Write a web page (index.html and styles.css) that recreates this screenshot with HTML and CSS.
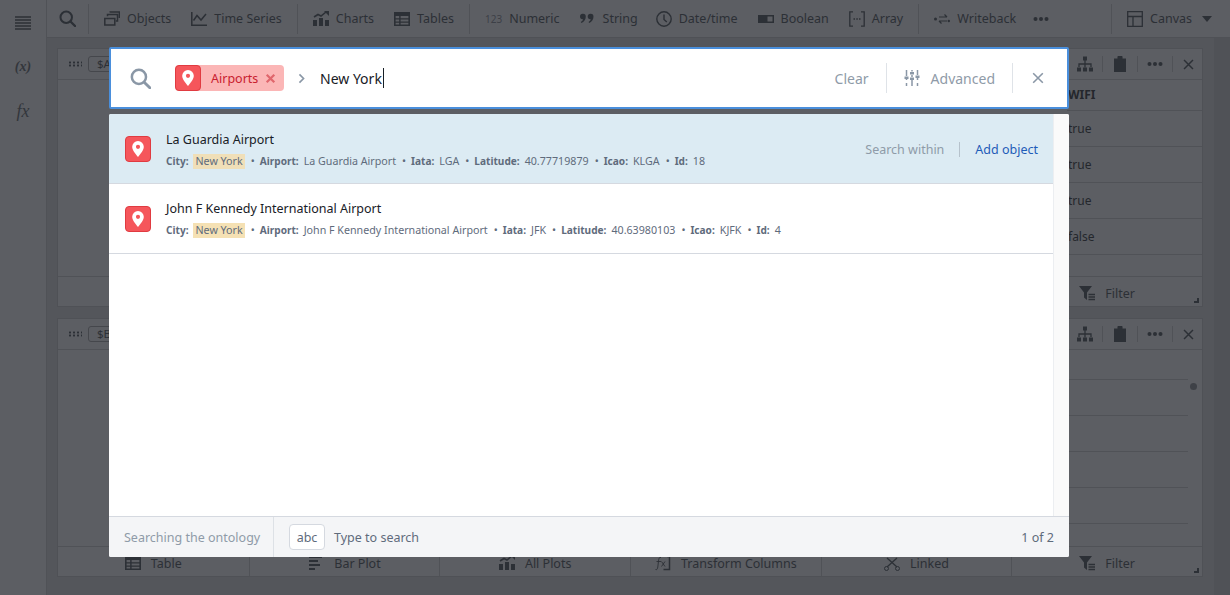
FILE: index.html
```html
<!DOCTYPE html>
<html lang="en">
<head>
<meta charset="utf-8">
<title>Object search</title>
<link rel="stylesheet" href="styles.css">
</head>
<body>
<svg class="defs" aria-hidden="true">
  <symbol id="i-search" viewBox="0 0 16 16"><circle cx="6.8" cy="6.8" r="5.4" fill="none" stroke="currentColor" stroke-width="1.9"/><path d="M10.8 10.8l4.3 4.3" stroke="currentColor" stroke-width="2.2" stroke-linecap="round"/></symbol>
  <symbol id="i-menu" viewBox="0 0 16 16"><path d="M0 2h16M0 5h16M0 8h16M0 11h16M0 14h16" stroke="currentColor" stroke-width="1.5"/></symbol>
  <symbol id="i-objects" viewBox="0 0 16 16"><path d="M.8 7.5h10v6.5H.8zM3.5 5.2V3.6h10V10h-1.6M6.2 1.4V1h9.2v6" fill="none" stroke="currentColor" stroke-width="1.5"/></symbol>
  <symbol id="i-series" viewBox="0 0 16 16"><path d="M.8 1v13.2H16" fill="none" stroke="currentColor" stroke-width="1.5"/><path d="M2.5 9.5l3.5-5 4 4.5 5-6" fill="none" stroke="currentColor" stroke-width="1.5"/></symbol>
  <symbol id="i-charts" viewBox="0 0 16 16"><path d="M0 9h4v6H0zM6 7h4v8H6zM12 9h4v6h-4z" fill="currentColor"/><path d="M1 6l4-2.5 3 1.5 5-4" fill="none" stroke="currentColor" stroke-width="1.6"/><path d="M11 0h5v5z" fill="currentColor"/></symbol>
  <symbol id="i-table" viewBox="0 0 16 16"><path fill-rule="evenodd" fill="currentColor" d="M0 1h16v14H0zM1.6 5v2.2h3.6V5zM6.6 5v2.2h7.8V5zM1.6 8.4v2.2h3.6V8.4zM6.6 8.4v2.2h7.8V8.4zM1.6 11.8v1.8h3.6v-1.8zM6.6 11.8v1.8h7.8v-1.8z"/></symbol>
  <symbol id="i-quote" viewBox="0 0 16 16"><path fill="currentColor" d="M0 5.2a3.2 3.2 0 1 1 6.6.3c0 3.4-2 6-5 7l-.6-1.200c1.400-.7 2.300-1.800 2.500-3A3.200 3.200 0 0 1 0 5.200zM8.800 5.200a3.200 3.200 0 1 1 6.600.3c0 3.400-2 6-5 7l-.6-1.200c1.400-.7 2.300-1.800 2.500-3a3.200 3.200 0 0 1-3.500-3.100z"/></symbol>
  <symbol id="i-clock" viewBox="0 0 16 16"><circle cx="8" cy="8" r="7.200" fill="none" stroke="currentColor" stroke-width="1.400"/><path d="M8 3.500V8.500l2.800 2.500" fill="none" stroke="currentColor" stroke-width="1.400"/></symbol>
  <symbol id="i-bool" viewBox="0 0 16 16"><path fill-rule="evenodd" fill="currentColor" d="M0 4h16v8H0zM9.500 5.500v5H14.500v-5z"/></symbol>
  <symbol id="i-array" viewBox="0 0 16 16"><path d="M4 .8H.8v14.400H4M12 .8h3.200v14.400H12" fill="none" stroke="currentColor" stroke-width="1.300"/><path d="M4.500 8h1.500M7.300 8h1.500M10 8h1.500" stroke="currentColor" stroke-width="1.500"/></symbol>
  <symbol id="i-write" viewBox="0 0 16 16"><circle cx="1.500" cy="8" r="1.500" fill="currentColor"/><path d="M5 6h8M10.500 3.500L13 6M5 10h8M7.500 12.500L5 10" fill="none" stroke="currentColor" stroke-width="1.200"/><circle cx="14.800" cy="10" r="1.200" fill="currentColor"/></symbol>
  <symbol id="i-dots" viewBox="0 0 16 16"><circle cx="2.500" cy="8" r="2" fill="currentColor"/><circle cx="8" cy="8" r="2" fill="currentColor"/><circle cx="13.500" cy="8" r="2" fill="currentColor"/></symbol>
  <symbol id="i-canvas" viewBox="0 0 16 16"><path d="M.7.700h14.600v14.600H.7zM.7 5.500h14.600M6 5.500v9.800" fill="none" stroke="currentColor" stroke-width="1.300"/></symbol>
  <symbol id="i-tree" viewBox="0 0 16 16"><path fill="currentColor" d="M6 .500h4v4H6zM0 11.500h4v4H0zM6 11.500h4v4H6zM12 11.500h4v4h-4z"/><path d="M8 4v7.500M2 11V8h12v3" fill="none" stroke="currentColor" stroke-width="1.300"/></symbol>
  <symbol id="i-clip" viewBox="0 0 16 16"><path fill="currentColor" d="M2 2.500h3.500V1.500a1 1 0 0 1 1-1.500h3a1 1 0 0 1 1 1.500v1H14V16H2z"/></symbol>
  <symbol id="i-x" viewBox="0 0 16 16"><path d="M2.500 2.500l11 11M13.500 2.500l-11 11" stroke="currentColor" stroke-width="1.800"/></symbol>
  <symbol id="i-x-bold" viewBox="0 0 16 16"><path d="M2.500 2.500l11 11M13.500 2.500l-11 11" stroke="currentColor" stroke-width="3.200"/></symbol>
  <symbol id="i-filter" viewBox="0 0 16 16"><path fill="currentColor" d="M0 1h13L8 7.500V15L5 12.500V7.500z"/><path d="M9.500 9.500H16M9.500 12H16M9.500 14.500H16" stroke="currentColor" stroke-width="1.300"/></symbol>
  <symbol id="i-bars" viewBox="0 0 16 16"><path d="M1 2h13M1 6h9M1 10h11M1 14h6" stroke="currentColor" stroke-width="1.800"/></symbol>
  <symbol id="i-fx" viewBox="0 0 16 16"><path d="M12 1.500h2.500v13H8.500" fill="none" stroke="currentColor" stroke-width="1.500"/><path d="M6 2.500C4 2 3.800 3.500 3.500 6L2.800 12C2.500 14 2 15 .5 14.500M1.500 6.500H6M6.500 6.500l3.500 5M10 6.500l-3.500 5" fill="none" stroke="currentColor" stroke-width=".9"/></symbol>
  <symbol id="i-linked" viewBox="0 0 16 16"><circle cx="2.500" cy="13.500" r="2" fill="none" stroke="currentColor" stroke-width="1"/><circle cx="13.500" cy="13.500" r="2" fill="none" stroke="currentColor" stroke-width="1"/><path d="M3 3l10 9M13 3L3 12" stroke="currentColor" stroke-width="1.300"/></symbol>
  <symbol id="i-pin" viewBox="0 0 16 16"><path fill-rule="evenodd" fill="currentColor" d="M8 0a5.800 5.800 0 0 1 5.800 5.800C13.800 9.500 10 13.500 8 16 6 13.500 2.200 9.500 2.200 5.800A5.800 5.800 0 0 1 8 0zM8 3.700a2.100 2.100 0 1 0 0 4.200 2.100 2.100 0 0 0 0-4.200z"/></symbol>
  <symbol id="i-sliders" viewBox="0 0 16 16"><path d="M2.500 0v6M2.500 9v1M2.500 13v3M8 0v1.500M8 5v2M8 10v6M13.500 0v5M13.500 8v2M13.500 13v3" stroke="currentColor" stroke-width="1.500"/><path d="M.5 6.500h4v2.500h-4zM6 2h4v2.500H6zM6 7.500h4V10H6zM11.500 5.500h4V8h-4z" fill="currentColor"/></symbol>
  <symbol id="i-chev" viewBox="0 0 16 16"><path d="M5 2l6 6-6 6" fill="none" stroke="currentColor" stroke-width="2.400"/></symbol>
</svg>

<div class="app">
  <aside class="rail">
    <svg class="rail-menu"><use href="#i-menu"/></svg>
    <span class="rail-var">(x)</span>
    <span class="rail-fx">fx</span>
  </aside>
  <div class="main">
    <header class="toolbar">
      <svg class="ic ic-lg tb-search"><use href="#i-search"/></svg>
      <span class="tb-sep"></span>
      <span class="tool"><svg class="ic"><use href="#i-objects"/></svg>Objects</span>
      <span class="tool"><svg class="ic"><use href="#i-series"/></svg>Time Series</span>
      <span class="tb-sep"></span>
      <span class="tool"><svg class="ic"><use href="#i-charts"/></svg>Charts</span>
      <span class="tool"><svg class="ic"><use href="#i-table"/></svg>Tables</span>
      <span class="tb-sep"></span>
      <span class="tool"><span class="num">123</span>Numeric</span>
      <span class="tool tool-string"><svg class="ic ic-sm"><use href="#i-quote"/></svg>String</span>
      <span class="tool"><svg class="ic"><use href="#i-clock"/></svg>Date/time</span>
      <span class="tool"><svg class="ic"><use href="#i-bool"/></svg>Boolean</span>
      <span class="tool"><svg class="ic"><use href="#i-array"/></svg>Array</span>
      <span class="tb-sep"></span>
      <span class="tool tool-write"><svg class="ic"><use href="#i-write"/></svg>Writeback</span>
      <svg class="ic"><use href="#i-dots"/></svg>
      <span class="tb-fill"></span>
      <span class="tb-sep"></span>
      <span class="tool"><svg class="ic"><use href="#i-canvas"/></svg>Canvas<span class="caret"></span></span>
    </header>
    <div class="stage">
      <div class="panels">
        <section class="panel">
          <div class="panel-head">
            <span class="grip"></span><span class="token">$A</span><span class="head-fill"></span>
            <svg class="ic"><use href="#i-tree"/></svg><span class="head-sep"></span>
            <svg class="ic"><use href="#i-clip"/></svg><span class="head-sep"></span>
            <svg class="ic"><use href="#i-dots"/></svg><span class="head-sep"></span>
            <svg class="ic ic-x"><use href="#i-x"/></svg>
          </div>
          <div class="panel-body">
            <div class="cols">
              <div class="cell cell-head">WIFI</div>
              <div class="cell">true</div>
              <div class="cell">true</div>
              <div class="cell">true</div>
              <div class="cell">false</div>
            </div>
          </div>
          <div class="panel-foot">
            <span class="foot-item"><svg class="ic"><use href="#i-table"/></svg>Table</span>
            <span class="foot-item"><svg class="ic"><use href="#i-bars"/></svg>Bar Plot</span>
            <span class="foot-item"><svg class="ic"><use href="#i-charts"/></svg>All Plots</span>
            <span class="foot-item"><svg class="ic"><use href="#i-fx"/></svg>Transform Columns</span>
            <span class="foot-item"><svg class="ic"><use href="#i-linked"/></svg>Linked</span>
            <span class="foot-item"><svg class="ic"><use href="#i-filter"/></svg>Filter</span>
            <span class="resize"></span>
          </div>
        </section>
        <section class="panel">
          <div class="panel-head">
            <span class="grip"></span><span class="token">$B</span><span class="head-fill"></span>
            <svg class="ic"><use href="#i-tree"/></svg><span class="head-sep"></span>
            <svg class="ic"><use href="#i-clip"/></svg><span class="head-sep"></span>
            <svg class="ic"><use href="#i-dots"/></svg><span class="head-sep"></span>
            <svg class="ic ic-x"><use href="#i-x"/></svg>
          </div>
          <div class="panel-body panel-body-chart">
            <div class="chart">
              <div class="grid-line"></div>
              <div class="grid-line"></div>
              <div class="grid-line"></div>
              <div class="grid-line"></div>
              <div class="grid-line"></div>
            </div>
            <span class="chart-dot"></span>
          </div>
          <div class="panel-foot">
            <span class="foot-item"><svg class="ic"><use href="#i-table"/></svg>Table</span>
            <span class="foot-item"><svg class="ic"><use href="#i-bars"/></svg>Bar Plot</span>
            <span class="foot-item"><svg class="ic"><use href="#i-charts"/></svg>All Plots</span>
            <span class="foot-item"><svg class="ic"><use href="#i-fx"/></svg>Transform Columns</span>
            <span class="foot-item"><svg class="ic"><use href="#i-linked"/></svg>Linked</span>
            <span class="foot-item"><svg class="ic"><use href="#i-filter"/></svg>Filter</span>
            <span class="resize"></span>
          </div>
        </section>
      </div>
      <div class="gutter"></div>
    </div>
  </div>
</div>

<div class="overlay">
  <div class="searchbar">
    <svg class="sb-search"><use href="#i-search"/></svg>
    <span class="chip">
      <span class="pin-box"><svg class="pin"><use href="#i-pin"/></svg></span>
      <span class="chip-label">Airports</span>
      <svg class="chip-x"><use href="#i-x-bold"/></svg>
    </span>
    <svg class="chev"><use href="#i-chev"/></svg>
    <span class="query">New York</span><span class="cursor"></span>
    <span class="sb-fill"></span>
    <span class="sb-btn">Clear</span>
    <span class="sb-sep"></span>
    <svg class="sliders"><use href="#i-sliders"/></svg>
    <span class="sb-btn">Advanced</span>
    <span class="sb-sep sb-sep-b"></span>
    <svg class="sb-x"><use href="#i-x"/></svg>
  </div>
  <div class="results">
    <div class="results-scroll">
      <div class="list">
        <article class="row row-active">
          <span class="pin-box pin-box-row"><svg class="pin"><use href="#i-pin"/></svg></span>
          <div class="row-text">
            <div class="row-title">La Guardia Airport</div>
            <div class="row-meta"><b>City:</b><mark>New York</mark><i>•</i><b>Airport:</b><span>La Guardia Airport</span><i>•</i><b>Iata:</b><span>LGA</span><i>•</i><b>Latitude:</b><span>40.77719879</span><i>•</i><b>Icao:</b><span>KLGA</span><i>•</i><b>Id:</b><span>18</span></div>
          </div>
          <div class="row-actions"><span class="act-muted">Search within</span><span class="act-sep"></span><span class="act-link">Add object</span></div>
        </article>
        <article class="row">
          <span class="pin-box pin-box-row"><svg class="pin"><use href="#i-pin"/></svg></span>
          <div class="row-text">
            <div class="row-title">John F Kennedy International Airport</div>
            <div class="row-meta"><b>City:</b><mark>New York</mark><i>•</i><b>Airport:</b><span>John F Kennedy International Airport</span><i>•</i><b>Iata:</b><span>JFK</span><i>•</i><b>Latitude:</b><span>40.63980103</span><i>•</i><b>Icao:</b><span>KJFK</span><i>•</i><b>Id:</b><span>4</span></div>
          </div>
        </article>
      </div>
      <div class="scroll-track"></div>
    </div>
    <footer class="res-foot">
      <span class="res-scope">Searching the ontology</span>
      <span class="res-key">abc</span>
      <span class="res-hint">Type to search</span>
      <span class="res-count">1 of 2</span>
    </footer>
  </div>
</div>
</body>
</html>
```
FILE: styles.css
```css
* { box-sizing: border-box; }
html, body { margin: 0; height: 100%; overflow: hidden; }
body { font-family: "Noto Sans", "Open Sans", sans-serif; color: #2c3036; background: #54565b; }
.defs { position: absolute; width: 0; height: 0; }
.app { display: flex; height: 595px; }
.ic { width: 16px; height: 16px; flex: none; color: #2c3036; }
.ic-lg { width: 17px; height: 17px; }
.ic-sm { width: 14px; height: 14px; }
.ic-x { width: 13px; height: 13px; }

.rail { width: 47px; flex: none; background: #5c5e63; border-right: 1px solid #505257; display: flex; flex-direction: column; align-items: center; }
.rail-menu { width: 16px; height: 16px; margin-top: 15px; color: #2c3036; }
.rail-var, .rail-fx { font-family: "Liberation Serif", serif; font-style: italic; color: #33363c; }
.rail-var { font-size: 14px; font-weight: 700; margin-top: 28px; }
.rail-fx { font-size: 18px; margin-top: 26px; }

.main { flex: 1; min-width: 0; display: flex; flex-direction: column; }
.toolbar { height: 38px; flex: none; display: flex; align-items: center; padding: 0 18px 0 12px; background: #5c5e63; border-bottom: 1px solid #4f5156; font-size: 12.500px; gap: 20px; color: #2c3036; white-space: nowrap; }
.tb-search { margin-right: -3px; }
.tool { display: flex; align-items: center; gap: 7px; }
.tool-string { gap: 9px; margin-right: -2px; }
.tool-write { margin-right: -3px; }
.tb-sep { width: 1px; height: 30px; background: #505257; margin: 0 -5px 0 -5px; flex: none; }
.tb-fill { flex: 1; }
.num { font-size: 10px; color: #3c4047; }
.caret { width: 0; height: 0; border: 5px solid transparent; border-top: 6px solid #2c3036; border-bottom: 0; margin-left: 3px; }

.stage { flex: 1; display: flex; min-height: 0; }
.panels { flex: 1; display: grid; grid-template-rows: 259px 259px; gap: 11px; padding: 10px 11px 0 10px; }
.gutter { width: 16px; background: #505257; flex: none; }
.panel { display: flex; flex-direction: column; background: #5c5e63; border: 1px solid #4f5156; min-height: 0; }
.panel-head { height: 31px; flex: none; display: flex; align-items: center; gap: 9px; padding: 0 7px 0 10px; border-bottom: 1px solid #505257; }
.grip { width: 14px; height: 6px; background-image: radial-gradient(circle, #2c3036 1px, transparent 1.200px); background-size: 4px 3px; }
.token { margin-left: -3px; height: 16px; width: 60px; font-size: 11.500px; line-height: 14px; padding-left: 8px; border: 1px solid #45474c; border-radius: 3px; color: #2c3036; }
.head-fill { flex: 1; }
.head-sep { width: 1px; height: 16px; background: #505257; }
.panel-body { flex: 1; display: flex; justify-content: flex-end; min-height: 0; position: relative; }
.cols { width: 135px; font-size: 12px; }
.cell { height: 36px; line-height: 36px; padding-left: 1px; border-bottom: 1px solid #505257; color: #24272c; }
.cell-head { height: 31px; line-height: 29px; font-weight: 700; }
.panel-body-chart { padding: 29px 14px 0 0; }
.chart { width: 1000px; }
.grid-line { height: 36px; border-top: 1px solid #505257; }
.chart-dot { position: absolute; right: 5px; top: 33px; width: 7px; height: 7px; border-radius: 50%; background: #3e4147; }
.panel-foot { height: 30px; flex: none; display: grid; grid-template-columns: repeat(6, 1fr); border-top: 1px solid #505257; position: relative; font-size: 12.500px; }
.foot-item { display: flex; align-items: center; justify-content: center; gap: 10px; padding-top: 3px; border-left: 1px solid #505257; color: #2c3036; white-space: nowrap; }
.foot-item:first-child { border-left: 0; }
.resize { position: absolute; right: 3px; bottom: 3px; width: 5px; height: 5px; border-right: 2px solid #2c3036; border-bottom: 2px solid #2c3036; }

.overlay { position: absolute; top: 0; left: 0; width: 1230px; height: 595px; display: flex; flex-direction: column; padding: 47px 161px 38px 109px; gap: 5px; }
.searchbar { height: 62px; flex: none; background: #fff; border: 2px solid #4a8fdc; border-radius: 2px; display: flex; align-items: center; padding: 0 22px 0 19px; }
.sb-search { width: 21px; height: 21px; color: #8a97a6; margin-right: 24px; flex: none; }
.chip { display: flex; align-items: center; height: 26px; width: 109px; background: #fbb6b6; border-radius: 4px; flex: none; }
.pin-box { width: 26px; height: 26px; background: #f5565b; border: 1px solid #e03b41; border-radius: 4px; display: flex; align-items: center; justify-content: center; flex: none; }
.pin { width: 16px; height: 16px; color: #fff; }
.chip-label { font-size: 12.500px; color: #c9202f; margin-left: 10px; }
.chip-x { width: 11px; height: 11px; color: #e0666c; margin-left: 7px; }
.chev { width: 11px; height: 11px; color: #8a97a6; margin: 0 13px 0 12px; flex: none; }
.query { font-size: 14px; color: #182026; }
.cursor { width: 1px; height: 20px; background: #182026; margin-left: 1px; }
.sb-fill { flex: 1; }
.sb-btn { font-size: 14px; color: #8f9ba8; }
.sb-sep { width: 1px; height: 30px; background: #dfe3e8; margin: 0 17px; flex: none; }
.sb-sep-b { margin-right: 18px; }
.sliders { width: 16px; height: 16px; color: #8a97a6; margin-right: 11px; flex: none; }
.sb-x { width: 14px; height: 14px; color: #8a97a6; flex: none; }

.results { flex: 1; min-height: 0; background: #fff; border-radius: 2px; display: flex; flex-direction: column; overflow: hidden; }
.results-scroll { flex: 1; min-height: 0; display: flex; }
.list { flex: 1; min-width: 0; }
.scroll-track { width: 16px; flex: none; background: #fafafa; border-left: 1px solid #eceef1; }
.row { height: 70px; display: flex; align-items: flex-start; padding: 15px 15px 0 16px; border-bottom: 1px solid #d5d9e0; }
.row-active { background: #dcebf3; padding-top: 16px; }
.pin-box-row { margin-top: 7px; }
.row-active .pin-box-row { margin-top: 6px; }
.row-text { margin-left: 15px; flex: 1; min-width: 0; }
.row-title { font-size: 12.500px; line-height: 20px; color: #182026; }
.row-meta { display: flex; align-items: center; margin-top: 4px; font-size: 10.700px; line-height: 15px; color: #5f6b7c; white-space: nowrap; }
.row-meta b { font-size: 10.100px; font-weight: 700; margin-right: 5px; }
.row-meta i { font-style: normal; margin: 0 5px 0 6px; }
.row-meta mark { background: #f5e1b4; color: #5f6b7c; padding: 0 2px; }
.row-active mark { background: #f0dfb8; }
.row-actions { display: flex; align-items: center; height: 16px; margin-top: 11px; font-size: 12.500px; }
.act-muted { color: #8f9ba8; }
.act-sep { width: 1px; height: 15px; background: #b6c2cc; margin: 0 15px; }
.act-link { color: #1f5cb8; }

.res-foot { height: 41px; flex: none; display: flex; align-items: center; background: #f4f5f7; border-top: 1px solid #d5d9e0; font-size: 12.500px; color: #5f6b7c; }
.res-scope { width: 165px; height: 100%; display: flex; align-items: center; padding-left: 15px; color: #8f9ba8; border-right: 1px solid #dde1e6; flex: none; }
.res-key { width: 36px; height: 26px; margin-left: 15px; background: #fff; border: 1px solid #d5d9e0; border-radius: 4px; display: flex; align-items: center; justify-content: center; }
.res-hint { margin-left: 9px; }
.res-count { margin-left: auto; margin-right: 15px; }
```
